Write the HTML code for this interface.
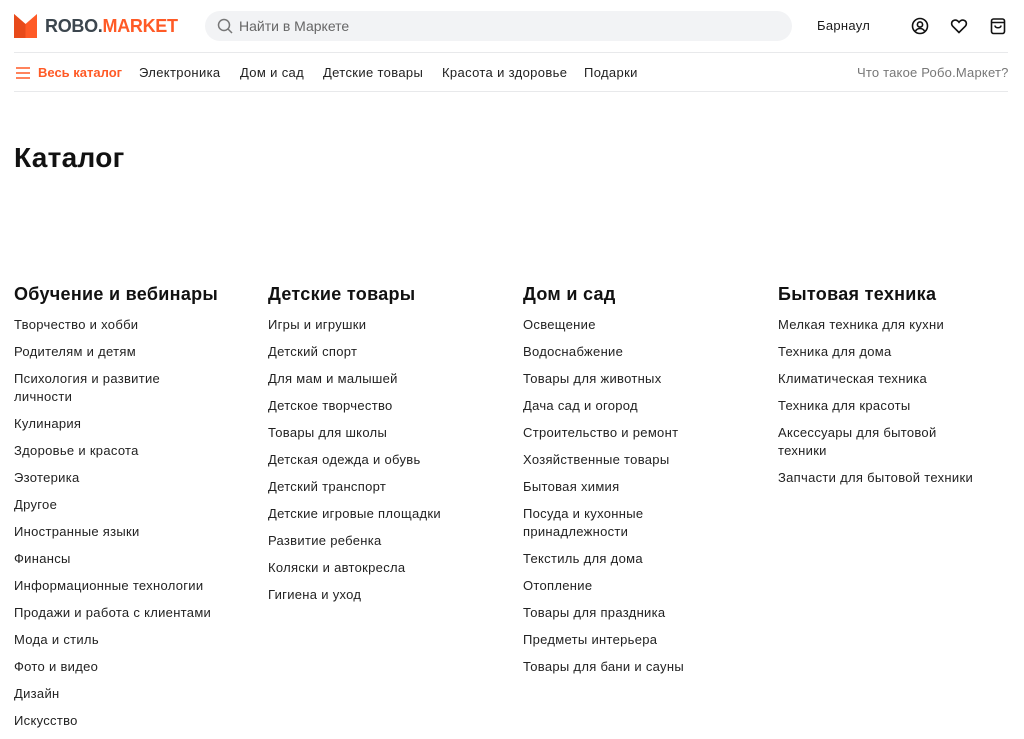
<!DOCTYPE html>
<html><head><meta charset="utf-8"><style>
*{margin:0;padding:0;box-sizing:border-box}
body{width:1024px;height:730px;overflow:hidden;background:#fff;font-family:"Liberation Sans","DejaVu Sans",sans-serif;color:#1a1a1a;position:relative}
.abs{position:absolute}
.logo{left:14px;top:14px;display:flex;align-items:center}
.logo .t{font-size:18px;font-weight:bold;letter-spacing:-0.3px;margin-left:8px;color:#3c464e}
.logo .t span{color:#ff5a26}
.search{left:205px;top:11px;width:587px;height:30px;border-radius:15px;background:#f2f3f5;font-size:14px;color:#666;display:flex;align-items:center;padding-left:12px}
.hr{left:14px;width:994px;height:1px;background:#e8e9eb}
.nav{top:65px;font-size:13px;color:#222;white-space:nowrap;letter-spacing:0.35px}
h1{position:absolute;left:14px;top:142px;font-size:28px;font-weight:bold;color:#111;letter-spacing:0.3px}
.col{position:absolute;top:283px;width:240px}
.col h2{font-size:18px;font-weight:bold;margin-bottom:11px;height:22px;line-height:22px;color:#111;letter-spacing:0.3px}
.col div{font-size:13px;line-height:18px;margin-bottom:9px;color:#222;letter-spacing:0.3px}
</style></head><body>
<div class="abs logo">
<svg width="23" height="24" viewBox="0 0 23 24"><path d="M0 0 L11.5 10 L23 0 V24 H0Z" fill="#ff5a26"/><path d="M0 0 L11.5 10 V24 H0Z" fill="#e84a1a"/></svg>
<div class="t">ROBO.<span>MARKET</span></div></div>
<div class="abs search"><svg width="16" height="16" viewBox="0 0 16 16" style="margin-right:6px"><circle cx="7" cy="7" r="5.5" fill="none" stroke="#777" stroke-width="1.5"/><path d="M11 11l4 4" stroke="#777" stroke-width="1.5"/></svg>Найти в Маркете</div>
<div class="abs" style="left:817px;top:18px;font-size:13px;letter-spacing:0.3px">Барнаул</div>
<svg class="abs" style="left:911px;top:17px" width="18" height="18" viewBox="0 0 18 18"><circle cx="9" cy="9" r="7.5" fill="none" stroke="#111" stroke-width="1.6"/><circle cx="9" cy="7.5" r="2.6" fill="none" stroke="#111" stroke-width="1.6"/><path d="M4.5 14c1.2-2 2.7-2.5 4.5-2.5s3.3.5 4.5 2.5" fill="none" stroke="#111" stroke-width="1.6"/></svg>
<svg class="abs" style="left:950px;top:17px" width="18" height="18" viewBox="0 0 18 18"><path d="M9 15.5L2.8 9.3C1 7.5 1.3 4.5 3.6 3.5 5.6 2.6 7.6 3.5 9 5.3 10.4 3.5 12.4 2.6 14.4 3.5 16.7 4.5 17 7.5 15.2 9.3Z" fill="none" stroke="#111" stroke-width="1.6"/></svg>
<svg class="abs" style="left:990px;top:16px" width="16" height="19" viewBox="0 0 16 19"><rect x="1.5" y="3" width="13" height="14.5" rx="2" fill="none" stroke="#111" stroke-width="1.6"/><path d="M1.5 6.5h13M5 9.5c0 3 6 3 6 0" fill="none" stroke="#111" stroke-width="1.6"/></svg>
<div class="abs hr" style="top:52px"></div>
<svg class="abs" style="left:16px;top:67px" width="14" height="12" viewBox="0 0 14 12"><path d="M0 1h14M0 6h14M0 11h14" stroke="#ff5a26" stroke-width="1.6"/></svg>
<div class="abs nav" style="left:38px;color:#ff5a26;font-weight:bold;letter-spacing:0">Весь каталог</div>
<div class="abs nav" style="left:139px">Электроника</div>
<div class="abs nav" style="left:240px">Дом и сад</div>
<div class="abs nav" style="left:323px">Детские товары</div>
<div class="abs nav" style="left:442px">Красота и здоровье</div>
<div class="abs nav" style="left:584px">Подарки</div>
<div class="abs nav" style="left:857px;color:#777;letter-spacing:0.2px">Что такое Робо.Маркет?</div>
<div class="abs hr" style="top:91px"></div>
<h1>Каталог</h1>
<div class="col" style="left:14px"><h2>Обучение и вебинары</h2>
<div>Творчество и хобби</div><div>Родителям и детям</div><div>Психология и развитие<br>личности</div><div>Кулинария</div><div>Здоровье и красота</div><div>Эзотерика</div><div>Другое</div><div>Иностранные языки</div><div>Финансы</div><div>Информационные технологии</div><div>Продажи и работа с клиентами</div><div>Мода и стиль</div><div>Фото и видео</div><div>Дизайн</div><div>Искусство</div></div>
<div class="col" style="left:268px"><h2>Детские товары</h2>
<div>Игры и игрушки</div><div>Детский спорт</div><div>Для мам и малышей</div><div>Детское творчество</div><div>Товары для школы</div><div>Детская одежда и обувь</div><div>Детский транспорт</div><div>Детские игровые площадки</div><div>Развитие ребенка</div><div>Коляски и автокресла</div><div>Гигиена и уход</div></div>
<div class="col" style="left:523px"><h2>Дом и сад</h2>
<div>Освещение</div><div>Водоснабжение</div><div>Товары для животных</div><div>Дача сад и огород</div><div>Строительство и ремонт</div><div>Хозяйственные товары</div><div>Бытовая химия</div><div>Посуда и кухонные<br>принадлежности</div><div>Текстиль для дома</div><div>Отопление</div><div>Товары для праздника</div><div>Предметы интерьера</div><div>Товары для бани и сауны</div></div>
<div class="col" style="left:778px"><h2>Бытовая техника</h2>
<div>Мелкая техника для кухни</div><div>Техника для дома</div><div>Климатическая техника</div><div>Техника для красоты</div><div>Аксессуары для бытовой<br>техники</div><div>Запчасти для бытовой техники</div></div>
</body></html>
